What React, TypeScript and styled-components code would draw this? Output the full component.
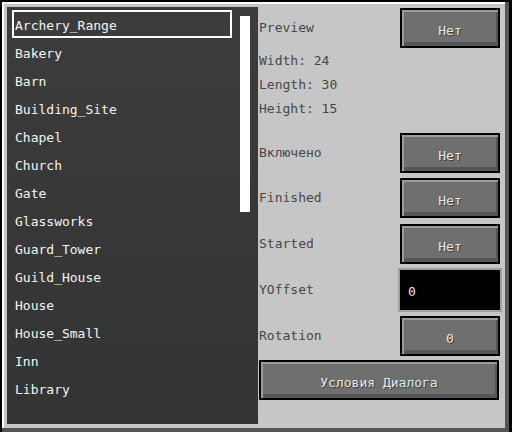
import React from "react";
import styled, { createGlobalStyle } from "styled-components";

const Global = createGlobalStyle`
  html, body { margin: 0; padding: 0; background: #c6c6c6; }
  body { font-family: "DejaVu Sans Mono", "Liberation Mono", monospace; }
`;

const Window = styled.div`
  box-sizing: border-box;
  width: 512px;
  height: 432px;
  background: #c6c6c6;
  border-top: 2px solid #000;
  border-left: 2px solid #000;
  border-right: 3px solid #000;
  box-shadow: inset -4px 0 0 #555555, inset 0 -4px 0 #555555, inset 2px 2px 0 #ffffff;
  padding: 5px 9px 8px 5px;
  display: grid;
  grid-template-columns: 251px 1fr;
  font-family: "DejaVu Sans Mono", "Liberation Mono", monospace;
  font-size: 13px;
`;

const List = styled.div`
  position: relative;
  background: linear-gradient(#3c3c3c, #333333);
  padding-top: 3px;
  overflow: hidden;
  display: flex;
  flex-direction: column;
`;

const Item = styled.div<{ $selected?: boolean }>`
  box-sizing: border-box;
  width: 220px;
  height: 28px;
  margin-left: 5px;
  padding: 2px 0 0 1px;
  line-height: 24px;
  color: #f4f4f4;
  white-space: nowrap;
  border: 2px solid ${(p) => (p.$selected ? "#ffffff" : "transparent")};
`;

const Scrollbar = styled.div`
  position: absolute;
  left: 233px;
  top: 9px;
  width: 10px;
  height: 196px;
  background: #ffffff;
`;

const Panel = styled.div`
  display: flex;
  flex-direction: column;
  padding: 1px 0 0 1px;
`;

const Row = styled.div<{ $mt?: number }>`
  display: flex;
  align-items: center;
  justify-content: space-between;
  margin-top: ${(p) => p.$mt ?? 0}px;
`;

const Label = styled.span`
  color: #474747;
  line-height: 16px;
  padding-bottom: 1px;
  white-space: nowrap;
`;

const InfoLine = styled.div`
  color: #474747;
  line-height: 24px;
  height: 24px;
  white-space: nowrap;
`;

const Info = styled.div`
  display: flex;
  flex-direction: column;
  margin-top: 1px;
`;

const Button = styled.div<{ $wide?: boolean }>`
  box-sizing: border-box;
  width: ${(p) => (p.$wide ? "240px" : "100px")};
  height: 40px;
  border: 2px solid #000;
  background: #6f6f6f;
  box-shadow: inset 2px 2px 0 #9c9c9c, inset -2px -4px 0 #565656;
  color: #e8e8e8;
  text-shadow: 1px 1px 0 #3a3a3a;
  display: flex;
  align-items: center;
  justify-content: center;
  padding-top: 4px;
  white-space: nowrap;
`;

const Field = styled.div`
  box-sizing: border-box;
  width: 104px;
  height: 44px;
  margin-right: -2px;
  border: 2px solid #a0a0a0;
  background: #000;
  color: #e0e0e0;
  display: flex;
  align-items: center;
  padding: 2px 0 0 8px;
`;

const items = [
  "Archery_Range",
  "Bakery",
  "Barn",
  "Building_Site",
  "Chapel",
  "Church",
  "Gate",
  "Glassworks",
  "Guard_Tower",
  "Guild_House",
  "House",
  "House_Small",
  "Inn",
  "Library",
];

export default function App() {
  return (
    <>
      <Global />
      <Window>
        <List>
          {items.map((name, i) => (
            <Item key={name} $selected={i === 0}>
              {name}
            </Item>
          ))}
          <Scrollbar />
        </List>
        <Panel>
          <Row>
            <Label>Preview</Label>
            <Button>Нет</Button>
          </Row>
          <Info>
            <InfoLine>Width: 24</InfoLine>
            <InfoLine>Length: 30</InfoLine>
            <InfoLine>Height: 15</InfoLine>
          </Info>
          <Row $mt={12}>
            <Label>Включено</Label>
            <Button>Нет</Button>
          </Row>
          <Row $mt={5}>
            <Label>Finished</Label>
            <Button>Нет</Button>
          </Row>
          <Row $mt={6}>
            <Label>Started</Label>
            <Button>Нет</Button>
          </Row>
          <Row $mt={4}>
            <Label>YOffset</Label>
            <Field>0</Field>
          </Row>
          <Row $mt={4}>
            <Label>Rotation</Label>
            <Button>0</Button>
          </Row>
          <Row $mt={4}>
            <Button $wide>Условия Диалога</Button>
          </Row>
        </Panel>
      </Window>
    </>
  );
}
